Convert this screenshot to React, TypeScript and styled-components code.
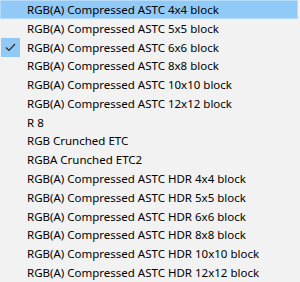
import React from 'react';
import styled, { createGlobalStyle } from 'styled-components';

const GlobalStyle = createGlobalStyle`
  html, body {
    margin: 0;
    padding: 0;
    background: #f2f2f2;
  }
  body {
    font-family: 'Segoe UI', 'Noto Sans', 'Open Sans', sans-serif;
  }
`;

const Menu = styled.ul`
  list-style: none;
  margin: 0;
  padding: 0 2px 0 0;
  width: 300px;
  height: 282px;
  overflow: hidden;
  box-sizing: border-box;
  display: flex;
  flex-direction: column;
  background: #f2f2f2;
`;

const Item = styled.li<{ hover?: boolean }>`
  display: flex;
  align-items: center;
  height: 18.8px;
  flex-shrink: 0;
  box-sizing: border-box;
  border: 1px solid ${({ hover }) => (hover ? '#b7dcf9' : 'transparent')};
  background: ${({ hover }) => (hover ? '#91c9f7' : 'transparent')};
  color: #000;
  font-size: 11.5px;
  white-space: nowrap;
`;

const CheckBox = styled.span<{ checked?: boolean }>`
  display: flex;
  align-items: center;
  justify-content: center;
  width: 19px;
  height: 19px;
  flex-shrink: 0;
  background: ${({ checked }) => (checked ? '#90c8f6' : 'transparent')};
`;

const Label = styled.span`
  margin-left: 7px;
  line-height: 17px;
`;

const items = [
  'RGB(A) Compressed ASTC 4x4 block',
  'RGB(A) Compressed ASTC 5x5 block',
  'RGB(A) Compressed ASTC 6x6 block',
  'RGB(A) Compressed ASTC 8x8 block',
  'RGB(A) Compressed ASTC 10x10 block',
  'RGB(A) Compressed ASTC 12x12 block',
  'R 8',
  'RGB Crunched ETC',
  'RGBA Crunched ETC2',
  'RGB(A) Compressed ASTC HDR 4x4 block',
  'RGB(A) Compressed ASTC HDR 5x5 block',
  'RGB(A) Compressed ASTC HDR 6x6 block',
  'RGB(A) Compressed ASTC HDR 8x8 block',
  'RGB(A) Compressed ASTC HDR 10x10 block',
  'RGB(A) Compressed ASTC HDR 12x12 block',
];

const Check = () => (
  <svg width="11" height="9" viewBox="0 0 11 9">
    <path d="M1 4.5 L4 7.5 L10 1" fill="none" stroke="#2b2b2b" strokeWidth="1.2" />
  </svg>
);

const App: React.FunctionComponent = () => {
  const hovered = 0;
  const selected = 2;

  return (
    <>
      <GlobalStyle />
      <Menu>
        {items.map((label, index) => (
          <Item key={index} hover={index === hovered}>
            <CheckBox checked={index === selected}>{index === selected && <Check />}</CheckBox>
            <Label>{label}</Label>
          </Item>
        ))}
      </Menu>
    </>
  );
};

export default App;
